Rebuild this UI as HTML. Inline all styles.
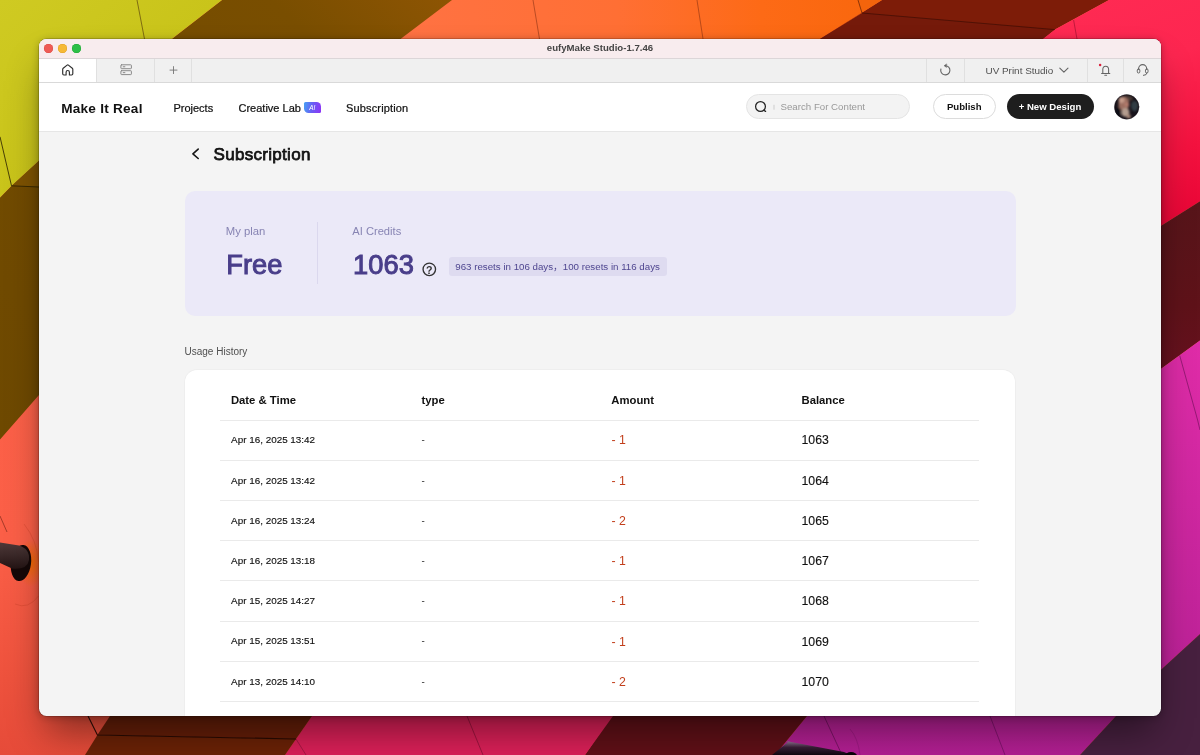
<!DOCTYPE html>
<html lang="en">
<head>
<meta charset="utf-8">
<title>eufyMake Studio-1.7.46</title>
<style>
*{box-sizing:border-box;margin:0;padding:0}
html,body{width:1200px;height:755px;overflow:hidden;background:#c33;}
body{font-family:"Liberation Sans","Noto Sans CJK SC",sans-serif;color:#111;position:relative}
#wall{position:absolute;left:0;top:0;width:1200px;height:755px;display:block}
#win{will-change:transform;position:absolute;left:39px;top:39px;width:1122px;height:677px;border-radius:7.5px;overflow:hidden;background:#f4f4f4;
 box-shadow:0 0 0 0.5px rgba(0,0,0,.30),0 22px 38px -7px rgba(0,0,0,.44),0 1px 8px rgba(0,0,0,.26)}
.abs{position:absolute;white-space:nowrap;line-height:1}
#titlebar{position:absolute;left:0;top:0;width:100%;height:19.5px;background:#f8ecee;border-bottom:1px solid #dcd6d8}
.tl{position:absolute;top:5px;width:8.8px;height:8.8px;border-radius:50%}
#ttl{left:0;width:100%;text-align:center;top:3.9px;font-size:9.62px;font-weight:bold;color:#444}
#tabbar{position:absolute;left:0;top:19.5px;width:100%;height:24px;background:#f0f0f0;border-bottom:1px solid #d9d9d9}
.tsep{position:absolute;top:0;width:1px;height:23px;background:#e0e0e0}
#hometab{position:absolute;left:0;top:0;width:57px;height:23px;background:#fff}
#header{position:absolute;left:0;top:43.5px;width:100%;height:49px;background:#fff;border-bottom:1px solid #e6e6e6}
.nav{font-size:11px;color:#111;top:20.7px;-webkit-text-stroke:.22px #111}
#search{position:absolute;left:707px;top:11.3px;width:164px;height:25px;border-radius:13px;background:#f3f3f3;border:1px solid #e4e4e4}
.btn{position:absolute;top:11.3px;height:25px;border-radius:13px;font-size:9.6px;font-weight:bold;text-align:center;line-height:24px}
#plan{position:absolute;left:145.5px;top:151.5px;width:831px;height:125px;border-radius:10px;background:#ebe9f8}
#card{position:absolute;left:145.6px;top:330.8px;width:830.6px;height:400px;border-radius:12px;background:#fff;box-shadow:0 0 0 .8px #ededed}
.th{font-size:11.3px;font-weight:bold;color:#111;top:25.3px}
.row{position:absolute;left:35.4px;width:759.2px;height:40.21px;border-top:1px solid #eaeaea}
.row .d{position:absolute;left:11.1px;top:14.8px;font-size:9.9px;line-height:1;color:#111;white-space:nowrap;-webkit-text-stroke:.14px #111}
.row .t{position:absolute;left:201.5px;top:14.8px;font-size:9.9px;line-height:1;color:#111}
.row .a{position:absolute;left:391.5px;top:13.9px;font-size:12.3px;line-height:1;color:#c23e1b;white-space:nowrap}
.row .b{position:absolute;left:581.5px;top:13.9px;font-size:12.3px;line-height:1;color:#111;-webkit-text-stroke:.12px #111}
</style>
</head>
<body>
<svg id="wall" viewBox="0 0 1200 755">
<defs>
<linearGradient id="gY" x1="0" y1="0" x2="1" y2="1"><stop offset="0" stop-color="#cfca22"/><stop offset=".5" stop-color="#c9c41a"/><stop offset="1" stop-color="#bcb712"/></linearGradient>
<linearGradient id="gB" x1="0" y1="1" x2="1" y2="0"><stop offset="0" stop-color="#6e4900"/><stop offset=".55" stop-color="#744c00"/><stop offset=".8" stop-color="#794e00"/><stop offset="1" stop-color="#8e5503"/></linearGradient>
<linearGradient id="gO" x1="0" y1="0" x2="1" y2="0"><stop offset="0" stop-color="#ff7243"/><stop offset=".45" stop-color="#ff6f34"/><stop offset=".75" stop-color="#fd6a16"/><stop offset="1" stop-color="#f9670c"/></linearGradient>
<linearGradient id="gS" x1="0" y1="0" x2="0" y2="1"><stop offset="0" stop-color="#fe644a"/><stop offset=".72" stop-color="#fb5f47"/><stop offset=".9" stop-color="#ee523d"/><stop offset="1" stop-color="#e64b39"/></linearGradient>
<linearGradient id="gP" x1="0" y1="0" x2=".25" y2="1"><stop offset="0" stop-color="#ff2b53"/><stop offset=".4" stop-color="#fd2650"/><stop offset=".75" stop-color="#f4123f"/><stop offset="1" stop-color="#ea0637"/></linearGradient>
<linearGradient id="gM" x1="0" y1="0" x2="0" y2="1"><stop offset="0" stop-color="#e02ca8"/><stop offset="1" stop-color="#b31f93"/></linearGradient>
<linearGradient id="gC" x1="0" y1="0" x2="0" y2="1"><stop offset="0" stop-color="#9a7c9c"/><stop offset=".45" stop-color="#3a2038"/><stop offset="1" stop-color="#120610"/></linearGradient>
<linearGradient id="gT" x1="0" y1="0" x2="0" y2="1"><stop offset="0" stop-color="#4e3838"/><stop offset=".5" stop-color="#3a2828"/><stop offset="1" stop-color="#241414"/></linearGradient>
<linearGradient id="gR" x1="0" y1="0" x2="0" y2="1"><stop offset="0" stop-color="#57151a"/><stop offset=".5" stop-color="#5f1219"/><stop offset="1" stop-color="#6c1022"/></linearGradient>
<radialGradient id="gG" cx=".5" cy=".5" r=".5"><stop offset="0" stop-color="#f26a00" stop-opacity=".95"/><stop offset="1" stop-color="#f26a00" stop-opacity="0"/></radialGradient>
</defs>
<!-- salmon / red-orange base (left & bottom-left) -->
<rect width="1200" height="755" fill="url(#gS)"/>
<!-- orange top -->
<polygon points="452,0 882,0 820,39 700,400 400.5,39" fill="url(#gO)"/>
<!-- brown (top + left) -->
<polygon points="222,0 452,0 400.5,39 39,395 0,439.5 0,197.4 11.5,185.8 39,160.6 173,38" fill="url(#gB)"/>
<polygon points="39,160.6 11.5,185.8 39,187" fill="#7e5302"/>
<!-- yellow-green -->
<polygon points="0,0 222,0 173,38 39,160.6 11.5,185.8 0,197.4" fill="url(#gY)"/>
<!-- red-brown top right -->
<polygon points="882,0 1109,0 1055,29.6 1043,39 820,39" fill="#7d1c08"/>
<polygon points="862,13 1055,29.6 1043,39 820,39" fill="#751a0a"/>
<polygon points="858,0 882,0 820,39 862,13" fill="#f4640c"/>
<!-- pink-red right/top -->
<polygon points="1109,0 1200,0 1200,201.3 1161.5,225.5 1100,260 1043,39 1055,29.6" fill="url(#gP)"/>
<!-- maroon right -->
<polygon points="1200,201.3 1200,340.5 1161.5,368.4 1100,410 1100,260 1161.5,225.5" fill="url(#gR)"/>
<!-- magenta right + bottom -->
<polygon points="1200,340.5 1200,634 1161.5,669.3 1116,716 1080,755 775,755 807,716 1000,500 1161.5,368.4" fill="url(#gM)"/>
<!-- dark purple corner -->
<polygon points="1200,634 1200,755 1080,755 1116,716 1161.5,669.3" fill="#47203f"/>
<!-- bottom maroon -->
<polygon points="613,716 807,716 775,755 585,755 650,660" fill="#601017"/>
<!-- bottom pink -->
<polygon points="312,716 613,716 585,755 285,755 296,739" fill="#dc2058"/>
<!-- bottom brown panels -->
<polygon points="110,716 312,716 296,739 97.4,735" fill="#651e08"/>
<polygon points="97.4,735 296,739 285,755 85,755" fill="#6b2206"/>
<!-- thin lines -->
<g stroke="#3a1a08" stroke-width=".7" fill="none" stroke-opacity=".75">
<path d="M137,0 L144.5,39"/>
<path d="M0,136.8 L11.5,185.8 L39,187" stroke="#2a2000" stroke-width=".9" stroke-opacity=".9"/>
<path d="M533,0 L539.5,39" stroke="#7a2a10"/>
<path d="M697,0 L703,39" stroke="#7a2a10"/>
<path d="M858,0 L862,13 L1055,29.6" stroke="#2a0a04"/>
<path d="M1073.6,20 L1077,39" stroke="#8a0a28"/>
<path d="M1179.7,355.4 L1197.6,420 L1200,430" stroke="#5a0a48"/>
<path d="M0,516 L7,532" stroke="#5a1a10"/>
<path d="M24,524 Q37,540 38.5,562 M38.5,596 Q28,610 15,604" stroke="#c23a22" stroke-width=".6" stroke-opacity=".55"/>
<path d="M850,729 Q858,738 860,755" stroke="#7a1068" stroke-width=".6" stroke-opacity=".6"/>
<path d="M88,716 L97.4,735 L296,739" stroke="#220802" stroke-width="1.1" stroke-opacity=".95"/>
<path d="M296,739 L306,755" stroke="#7a1030"/>
<path d="M467,716 L483,755" stroke="#6a0a28"/>
<path d="M824,716 L842,755" stroke="#4a0a40"/>
<path d="M990,716 L1005,755" stroke="#5a0a50"/>
</g>
<!-- cylinder bottom -->
<polygon points="786,741 844,752 851,755 772,755 788,742" fill="url(#gC)"/>
<ellipse cx="851" cy="756" rx="6" ry="4" fill="#0a0408"/>
<!-- left tube + hole -->
<ellipse cx="31" cy="563" rx="14" ry="24" fill="url(#gG)"/>
<ellipse cx="21" cy="563" rx="10" ry="18.2" transform="rotate(8 21 563)" fill="#140808"/>
<path d="M0,542.5 L19,545.6 Q30,549 29,560 Q27.5,570 12,568.6 L0,563 Z" fill="url(#gT)"/>
</svg>

<div id="win">
  <div id="titlebar">
    <div class="tl" style="left:5px;background:#ee5b55;box-shadow:0 0 0 .5px #dd4a44 inset"></div>
    <div class="tl" style="left:18.9px;background:#f6b936;box-shadow:0 0 0 .5px #e0a023 inset"></div>
    <div class="tl" style="left:32.8px;background:#2dbf47;box-shadow:0 0 0 .5px #1fa833 inset"></div>
    <div class="abs" id="ttl">eufyMake Studio-1.7.46</div>
  </div>
  <div id="tabbar">
    <div id="hometab"></div>
    <div class="tsep" style="left:57px"></div>
    <div class="tsep" style="left:115px"></div>
    <div class="tsep" style="left:152px"></div>
    <div class="tsep" style="left:887px"></div>
    <div class="tsep" style="left:925px"></div>
    <div class="tsep" style="left:1047.5px"></div>
    <div class="tsep" style="left:1084px"></div>
    <div class="abs" style="left:946.5px;top:7.8px;font-size:9.92px;color:#505050">UV Print Studio</div>
  </div>
  <div id="header">
    <div class="abs" style="left:22.2px;top:19.1px;font-size:13.6px;font-weight:bold;color:#111;letter-spacing:.24px">Make It Real</div>
    <div class="abs nav" style="left:134.4px">Projects</div>
    <div class="abs nav" style="left:199.5px">Creative Lab</div>
    <div class="abs" style="left:264.9px;top:19px;width:17.1px;height:11.3px;border-radius:1.5px 4.5px 1.5px 4.5px;background:linear-gradient(100deg,#46a2f3 0%,#6a5df4 48%,#8d33f5 100%);color:#fff;font-size:6.4px;font-style:italic;text-align:center;line-height:11.6px;text-indent:-.5px">AI</div>
    <div class="abs nav" style="left:307px;letter-spacing:.15px">Subscription</div>
    <div id="search">
      <div class="abs" style="left:33.5px;top:7.1px;font-size:9.7px;color:#999">Search For Content</div>
    </div>
    <div class="btn" style="left:894px;width:62.5px;background:#fff;border:1px solid #dcdcdc;color:#111">Publish</div>
    <div class="btn" style="left:967.5px;width:87px;background:#1e1e1e;color:#fff;line-height:25px">+ New Design</div>
  </div>

  <div class="abs" style="left:174.5px;top:107.2px;font-size:17px;letter-spacing:.3px;color:#111;-webkit-text-stroke:.75px #111">Subscription</div>

  <div id="plan">
    <div class="abs" style="left:41.3px;top:35.6px;font-size:11.3px;color:#8784b3">My plan</div>
    <div class="abs" style="left:41.8px;top:60px;font-size:27.3px;color:#493e8a;-webkit-text-stroke:.95px #493e8a">Free</div>
    <div style="position:absolute;left:132.6px;top:31px;width:1px;height:62px;background:#dbd8ee"></div>
    <div class="abs" style="left:167.8px;top:35.6px;font-size:11.15px;color:#8784b3">AI Credits</div>
    <div class="abs" style="left:168.6px;top:60px;font-size:27.3px;color:#493e8a;-webkit-text-stroke:.95px #493e8a">1063</div>
    <div class="abs" style="left:264px;top:66.3px;width:218.5px;height:19.5px;border-radius:3px;background:#dedbf0;font-size:9.72px;line-height:19.5px;color:#4f4690;padding-left:6.8px">963 resets in 106 days，100 resets in 116 days</div>
  </div>

  <div class="abs" style="left:145.5px;top:308.4px;font-size:10px;color:#4f4f4f">Usage History</div>

  <div id="card">
    <div class="abs th" style="left:46.3px">Date &amp; Time</div>
    <div class="abs th" style="left:236.9px">type</div>
    <div class="abs th" style="left:426.7px">Amount</div>
    <div class="abs th" style="left:616.9px">Balance</div>
    <div class="row" style="top:49.80px"><span class="d">Apr 16, 2025 13:42</span><span class="t">-</span><span class="a">- 1</span><span class="b">1063</span></div>
    <div class="row" style="top:90.01px"><span class="d">Apr 16, 2025 13:42</span><span class="t">-</span><span class="a">- 1</span><span class="b">1064</span></div>
    <div class="row" style="top:130.22px"><span class="d">Apr 16, 2025 13:24</span><span class="t">-</span><span class="a">- 2</span><span class="b">1065</span></div>
    <div class="row" style="top:170.43px"><span class="d">Apr 16, 2025 13:18</span><span class="t">-</span><span class="a">- 1</span><span class="b">1067</span></div>
    <div class="row" style="top:210.64px"><span class="d">Apr 15, 2025 14:27</span><span class="t">-</span><span class="a">- 1</span><span class="b">1068</span></div>
    <div class="row" style="top:250.85px"><span class="d">Apr 15, 2025 13:51</span><span class="t">-</span><span class="a">- 1</span><span class="b">1069</span></div>
    <div class="row" style="top:291.06px"><span class="d">Apr 13, 2025 14:10</span><span class="t">-</span><span class="a">- 2</span><span class="b">1070</span></div>
    <div class="row" style="top:331.27px"></div>
  </div>
  <svg class="ico" viewBox="39 39 1122 677" style="position:absolute;left:0;top:0;width:1122px;height:677px;pointer-events:none" fill="none" stroke-linecap="round" stroke-linejoin="round">
    <defs>
      <filter id="bl" x="-30%" y="-30%" width="160%" height="160%"><feGaussianBlur stdDeviation="1.1"/></filter>
      <clipPath id="avc"><circle cx="1126.7" cy="106.9" r="12.3"/></clipPath>
    </defs>
    <!-- home -->
    <path d="M66.1,75 H63.9 Q62.7,75 62.7,73.8 V69.3 Q62.7,68.7 63.2,68.3 L67.1,65.1 Q67.75,64.6 68.4,65.1 L72.3,68.3 Q72.8,68.7 72.8,69.3 V73.8 Q72.8,75 71.6,75 H69.4 V72.2 A1.65,1.65 0 0 0 66.1,72.2 Z" stroke="#2e2e2e" stroke-width="1.15"/>
    <!-- layers -->
    <g stroke="#858585" stroke-width=".95">
      <rect x="120.9" y="64.8" width="10.5" height="3.9" rx=".7"/>
      <rect x="120.9" y="70.7" width="10.5" height="3.9" rx=".7"/>
      <path d="M123.2,66.75 H124.9 M123.2,72.65 H124.9"/>
    </g>
    <!-- plus -->
    <path d="M170,70.1 H177 M173.5,66.6 V73.6" stroke="#747474" stroke-width=".9"/>
    <!-- refresh -->
    <path d="M945.3,65.7 A4.6,4.6 0 1 1 940.9,69" stroke="#646464" stroke-width="1.1"/>
    <path d="M946.4,64.1 L944.1,65.75 L946.4,67.3 Z" fill="#646464" stroke="#646464" stroke-width=".5"/>
    <!-- chevron -->
    <path d="M1059.8,68.1 L1063.9,72.2 L1068,68.1" stroke="#646464" stroke-width="1.1"/>
    <!-- bell -->
    <path d="M1101.6,73.5 H1109.8 M1102.8,73.5 V69.6 A2.9,3.3 0 0 1 1108.6,69.6 V73.5 M1104.8,75.3 H1106.6" stroke="#646464" stroke-width="1.05"/>
    <circle cx="1100.1" cy="64.9" r="1.25" fill="#d9213c"/>
    <!-- headset -->
    <path d="M1138.6,69.2 V68.7 A4.05,4.05 0 0 1 1146.7,68.7 V69.2" stroke="#646464" stroke-width="1.05"/>
    <rect x="1137.3" y="68.9" width="2.5" height="4.1" rx="1.2" stroke="#646464" stroke-width="1"/>
    <rect x="1145.5" y="68.9" width="2.5" height="4.1" rx="1.2" stroke="#646464" stroke-width="1"/>
    <path d="M1147,73 Q1147,75.3 1143.4,75.4" stroke="#646464" stroke-width="1"/>
    <!-- search -->
    <circle cx="760.5" cy="106.5" r="4.9" stroke="#222" stroke-width="1.25"/>
    <path d="M763.7,110.3 L765.6,111.4" stroke="#222" stroke-width="1.25"/>
    <path d="M774,105.2 V109.3" stroke="#c9c9c9" stroke-width=".9"/>
    <!-- back chevron -->
    <path d="M198.2,149.1 L192.9,153.8 L198.2,158.5" stroke="#161616" stroke-width="1.6"/>
    <!-- help -->
    <circle cx="429.3" cy="269.3" r="6.25" stroke="#333" stroke-width="1.35"/>
    <text x="429.3" y="273.8" font-family="Liberation Sans, sans-serif" font-weight="bold" font-size="10.6" text-anchor="middle" fill="#333" stroke="none">?</text>
    <!-- avatar -->
    <g clip-path="url(#avc)">
      <rect x="1112" y="92" width="30" height="30" fill="#17121a"/>
      <g filter="url(#bl)">
        <ellipse cx="1134.5" cy="106" rx="3.6" ry="5.2" fill="#333e44"/>
        <ellipse cx="1127" cy="98.5" rx="6" ry="3" fill="#4a3a34"/>
        <ellipse cx="1123.8" cy="104" rx="5.4" ry="7" fill="#9c6e60"/>
        <ellipse cx="1121.6" cy="100" rx="3" ry="3" fill="#c49a88"/>
        <ellipse cx="1126.6" cy="104.5" rx="2.4" ry="2" fill="#b47a6c"/>
        <ellipse cx="1125.4" cy="112.4" rx="4" ry="4.4" fill="#b39c8e"/>
        <ellipse cx="1128.6" cy="116.4" rx="2.2" ry="2.2" fill="#a88878"/>
        <ellipse cx="1117.6" cy="113" rx="3.3" ry="6" fill="#100c16"/>
      </g>
    </g>
    <circle cx="1126.7" cy="106.9" r="12.3" stroke="#1a1418" stroke-opacity=".6" stroke-width=".6"/>
  </svg>
</div>
</body>
</html>
